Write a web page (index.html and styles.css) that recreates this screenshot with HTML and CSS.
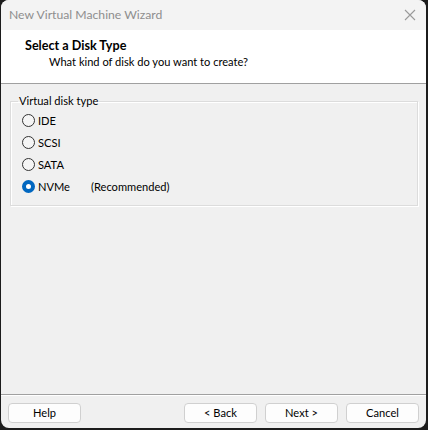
FILE: index.html
```html
<!DOCTYPE html>
<html>
<head>
<meta charset="utf-8">
<link rel="stylesheet" href="styles.css">
</head>
<body>
<div class="window">
  <div class="titlebar">
    <span class="title">New Virtual Machine Wizard</span>
    <svg class="close" width="12" height="12" viewBox="0 0 12 12"><path d="M1 1L11 11M11 1L1 11" stroke="#9a9a9a" stroke-width="1.1" fill="none"/></svg>
  </div>
  <div class="header">
    <div class="h-title">Select a Disk Type</div>
    <div class="h-sub">What kind of disk do you want to create?</div>
  </div>
  <div class="main">
    <fieldset class="group">
      <legend>Virtual disk type</legend>
      <label class="radio"><span class="dot"></span><span>IDE</span></label>
      <label class="radio"><span class="dot"></span><span>SCSI</span></label>
      <label class="radio"><span class="dot"></span><span>SATA</span></label>
      <label class="radio"><span class="dot checked"></span><span class="nvme">NVMe</span><span>(Recommended)</span></label>
    </fieldset>
  </div>
  <div class="footer">
    <button class="btn">Help</button>
    <div class="right">
      <button class="btn">&lt; Back</button>
      <button class="btn">Next &gt;</button>
      <button class="btn">Cancel</button>
    </div>
  </div>
</div>
</body>
</html>
```
FILE: styles.css
```css
html, body {
  margin: 0;
  padding: 0;
  background: #1c1c1c;
}
body {
  width: 428px;
  height: 430px;
  overflow: hidden;
  font-family: "Lato", "Noto Sans", sans-serif;
  font-size: 11.1px;
  color: #000;
}
.window {
  margin-left: 1px;
  width: 425px;
  height: 428px;
  background: #f0f0f0;
  border-radius: 8px;
  overflow: hidden;
  display: flex;
  flex-direction: column;
}
.titlebar {
  height: 30px;
  background: #f3f3f3;
  display: flex;
  align-items: center;
  justify-content: space-between;
  padding: 0 10px 0 8px;
  box-sizing: border-box;
}
.title {
  color: #8e8e8e;
  font-size: 12.2px;
  line-height: 1;
  margin-top: 1px;
}
.header {
  background: #fff;
  border-bottom: 1px solid #a0a0a0;
  padding-left: 24px;
  padding-top: 8px;
  box-sizing: border-box;
  height: 54px;
}
.h-title {
  font-weight: bold;
  font-size: 12.6px;
  line-height: 16px;
}
.h-sub {
  padding-left: 24px;
  line-height: 15px;
}
.main {
  flex: 1;
  padding: 10px 9px 0 9px;
}
.group {
  margin: 0;
  padding: 1px 0 9px 11px;
  border: 1px solid #dcdcdc;
  box-shadow: 1px 1px 0 #fff, inset 1px 1px 0 #fff;
  width: 408px;
  box-sizing: border-box;
  height: 112px;
}
.group legend {
  padding: 0 1px;
  margin-left: -4px;
  line-height: 14px;
}
.radio {
  display: flex;
  align-items: center;
  height: 22px;
}
.dot {
  width: 11px;
  height: 11px;
  border: 1px solid #333;
  border-radius: 50%;
  background: #f5f5f5;
  margin-right: 3px;
  box-sizing: content-box;
}
.dot.checked {
  background: #fff;
  border: 4px solid #0067c0;
  width: 5px;
  height: 5px;
}
.nvme {
  width: 53px;
}
.footer {
  border-top: 1px solid #a0a0a0;
  box-shadow: inset 0 1px 0 #fff;
  height: 34px;
  box-sizing: border-box;
  padding: 8px 7px 0 7px;
  display: flex;
  justify-content: space-between;
  align-items: flex-start;
}
.right {
  display: flex;
  gap: 8px;
}
.btn {
  width: 73px;
  height: 20px;
  background: #fdfdfd;
  border: 1px solid #d0d0d0;
  border-radius: 4px;
  font-family: inherit;
  font-size: 11.1px;
  padding: 0;
  line-height: 16px;
  color: #000;
}
```
